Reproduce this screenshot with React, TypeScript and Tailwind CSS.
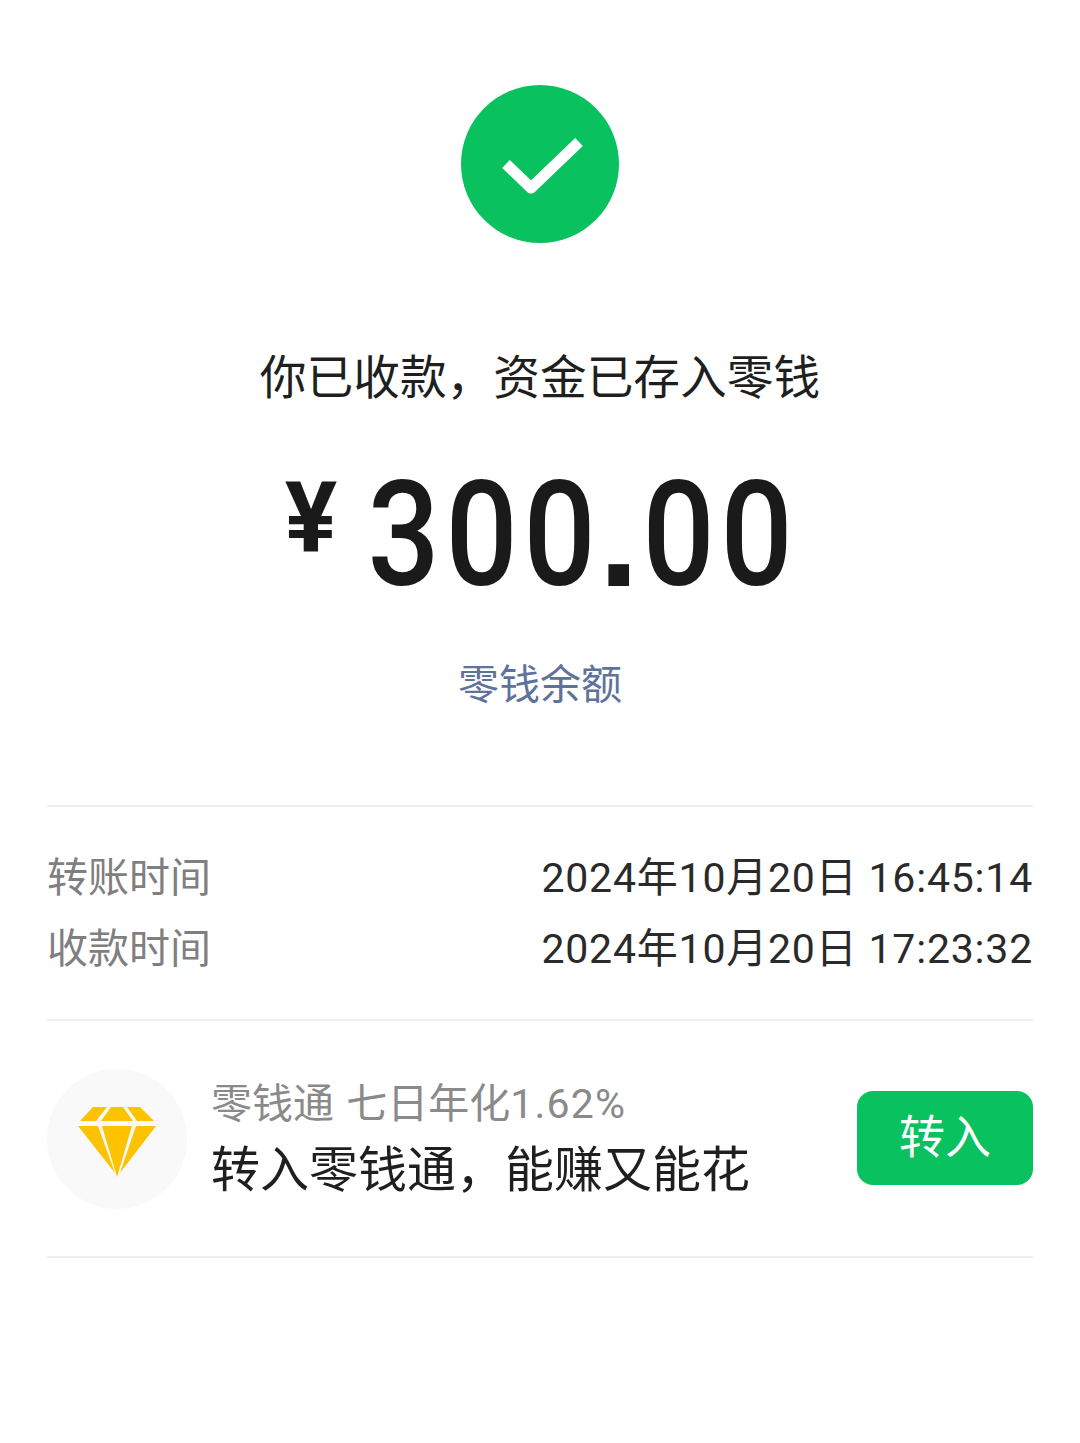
const FONT = "font-['Roboto','Noto_Sans_CJK_SC',sans-serif]";

const ROWS = [
  { label: "转账时间", value: "2024年10月20日 16:45:14" },
  { label: "收款时间", value: "2024年10月20日 17:23:32" },
];

function CheckBadge() {
  return (
    <svg width="158" height="158" viewBox="0 0 158 158" className="block">
      <circle cx="79" cy="79" r="79" fill="#0ac160" />
      <path
        d="M45 79 L70 103 L118 57"
        fill="none"
        stroke="#fff"
        strokeWidth="11"
        strokeLinejoin="round"
      />
    </svg>
  );
}

function Diamond() {
  return (
    <svg width="78" height="70" viewBox="0 0 78 70" className="block mt-[6px]">
      <g fill="#fdc200">
        <path d="M2 14 L15 0 L29 0 L18 14 Z" />
        <path d="M33 0 L45 0 L55 14 L23 14 Z" />
        <path d="M49 0 L62 0 L76 14 L59 14 Z" />
        <path d="M0 19 L20 19 L37 66 Z" />
        <path d="M24 19 L54 19 L39 70 Z" />
        <path d="M58 19 L78 19 L42 66 Z" />
      </g>
    </svg>
  );
}

// digits in the shot are narrower than Roboto and the dot is square
function Amount() {
  return (
    <div className="flex text-[146px] leading-[150px] font-[550]">
      {"300.00".split("").map((c, i) =>
        c === "." ? (
          <span key={i} className="w-[41px] flex justify-center font-['Liberation_Sans'] font-bold">.</span>
        ) : (
          <span key={i} className="w-[78px] flex justify-center">
            <span className="inline-block scale-x-[0.87]">{c}</span>
          </span>
        ),
      )}
    </div>
  );
}

export default function App() {
  return (
    <div className={`w-[1080px] h-[1443px] bg-white px-[47px] pt-[85px] ${FONT}`}>
      <div className="flex flex-col items-center">
        <CheckBadge />
        <p className="mt-[103px] text-[46.7px] leading-[64px] text-[#1f1f1f]">你已收款，资金已存入零钱</p>
        <div className="mt-[51px] flex items-start text-[#1a1a1a]">
          <span className="mt-[9px] mr-[27px] text-[98px] leading-[98px] font-bold">¥</span>
          <Amount />
        </div>
        <p className="mt-[46px] text-[41px] leading-[56px] text-[#5e7399]">零钱余额</p>
      </div>

      <div className="mt-[92px] border-t-2 border-b-2 border-[#eeeeee] pt-[43px] pb-[42px] flex flex-col gap-[15px]">
        {ROWS.map((r) => (
          <div key={r.label} className="flex justify-between text-[41px] leading-[56px]">
            <span className="text-[#7f7f7f]">{r.label}</span>
            <span className="text-[#2a2a2a] tracking-[0.8px]">{r.value}</span>
          </div>
        ))}
      </div>

      <div className="h-[237px] border-b-2 border-[#eeeeee] flex items-center">
        <div className="w-[140px] h-[140px] rounded-full bg-[#f9f9f9] flex items-center justify-center">
          <Diamond />
        </div>
        <div className="ml-[24px] flex-1">
          <p className="text-[41px] leading-[56px] text-[#8a8a8a]">
            零钱通 <span className="ml-[2px]">七日年化</span><span className="tracking-[1.2px]">1.62%</span>
          </p>
          <p className="mt-[11px] mb-[3px] text-[49px] leading-[56px] text-[#1f1f1f]">转入零钱通，能赚又能花</p>
        </div>
        <button className="w-[176px] h-[94px] mb-[2px] rounded-[16px] bg-[#0ac160] text-white text-[46px]">转入</button>
      </div>
    </div>
  );
}
